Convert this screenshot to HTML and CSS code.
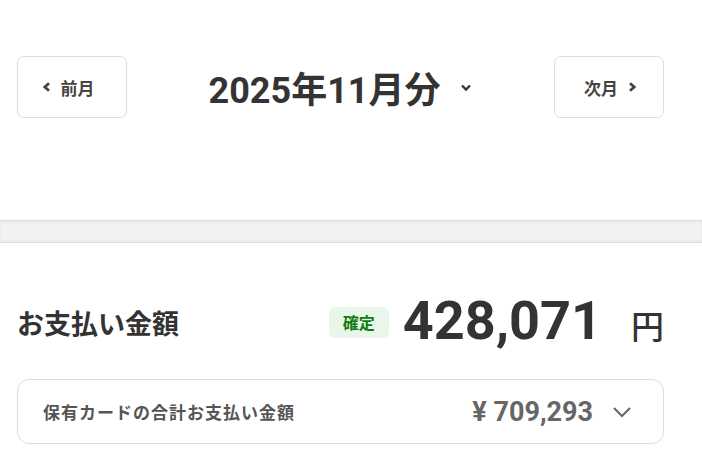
FILE: index.html
```html
<!doctype html>
<html lang="ja">
	<head>
		<meta charset="utf-8">
		<title>お支払い金額</title>
		<meta name="viewport" content="width=device-width,initial-scale=1">
		<link rel="stylesheet" href="styles.css">
	</head>
	<body>
		<div class="month-bar">
			<button class="month-btn prev">
				<svg width="9" height="10" viewBox="0 0 9 10"><path d="M7 1.3 2.8 5 7 8.7" fill="none" stroke="#444" stroke-width="2.8"/></svg>
				<span>前月</span>
			</button>
			<div class="month-title">
				<span>2025年11月分</span>
				<svg width="12" height="9" viewBox="0 0 12 9"><path d="M2 2.5 6 6.5 10 2.5" fill="none" stroke="#333" stroke-width="2.4"/></svg>
			</div>
			<button class="month-btn next">
				<span>次月</span>
				<svg width="9" height="10" viewBox="0 0 9 10"><path d="M2 1.3 6.2 5 2 8.7" fill="none" stroke="#444" stroke-width="2.8"/></svg>
			</button>
		</div>

		<div class="divider"></div>

		<div class="summary">
			<div class="summary-row">
				<h2 class="summary-label">お支払い金額</h2>
				<div class="summary-amount">
					<span class="badge">確定</span>
					<span class="amount">428,071</span>
					<span class="yen">円</span>
				</div>
			</div>
			<div class="card-total">
				<span class="card-label">保有カードの合計お支払い金額</span>
				<div class="card-right">
					<span class="card-value">¥ 709,293</span>
					<svg width="20" height="12" viewBox="0 0 20 12"><path d="M2 2 10 10 18 2" fill="none" stroke="#666" stroke-width="2"/></svg>
				</div>
			</div>
		</div>
	</body>
</html>
```

FILE: styles.css
```css
* {
	margin: 0;
	padding: 0;
	box-sizing: border-box;
}
body {
	background-color: #fff;
	font-family: Roboto, "Noto Sans CJK JP", sans-serif;
	color: #333;
}
.month-bar {
	display: flex;
	align-items: flex-start;
	justify-content: space-between;
	padding: 56px 38px 0 17px;
	height: 220px;
}
.month-btn {
	width: 110px;
	height: 62px;
	border: 1px solid #ddd;
	border-radius: 7px;
	background: #fff;
	display: flex;
	align-items: center;
	justify-content: center;
	gap: 10px;
	font-family: Roboto, "Noto Sans CJK JP", sans-serif;
	font-size: 17px;
	font-weight: 700;
	color: #444;
}
.month-btn.prev {
	padding-right: 8px;
}
.month-btn.next {
	padding-left: 3px;
}
.month-title {
	height: 62px;
	display: flex;
	align-items: center;
	gap: 20px;
	font-size: 36px;
	font-weight: 700;
	color: #333;
}
.divider {
	height: 23px;
	background-color: #f3f3f3;
	border-top: 1px solid #ddd;
	border-bottom: 1px solid #ddd;
	box-shadow: inset 0 2px 3px rgba(0,0,0,0.04), inset 0 -2px 3px rgba(0,0,0,0.04);
}
.summary {
	padding: 49px 38px 0 17px;
}
.summary-row {
	display: flex;
	align-items: center;
	justify-content: space-between;
	height: 60px;
}
.summary-label {
	font-size: 27px;
	font-weight: 700;
	color: #333;
}
.summary-amount {
	display: flex;
	align-items: center;
}
.badge {
	background-color: #e9f6ea;
	color: #137a13;
	font-size: 16px;
	font-weight: 700;
	border-radius: 6px;
	width: 60px;
	height: 31px;
	display: flex;
	align-items: center;
	justify-content: center;
	margin-right: 14px;
}
.amount {
	font-size: 54px;
	font-weight: 700;
	color: #333;
	margin-right: 29px;
	margin-top: -4px;
}
.yen {
	font-size: 33px;
	font-weight: 500;
	color: #333;
	margin-top: 6px;
}
.card-total {
	margin-top: 27px;
	height: 65px;
	border: 1px solid #ddd;
	border-radius: 12px;
	display: flex;
	align-items: center;
	justify-content: space-between;
	padding: 0 31px 0 25px;
}
.card-label {
	font-size: 17px;
	font-weight: 700;
	letter-spacing: 1px;
	color: #555;
}
.card-right {
	display: flex;
	align-items: center;
	gap: 19px;
}
.card-value {
	font-size: 27px;
	font-weight: 700;
	color: #666;
}
```
